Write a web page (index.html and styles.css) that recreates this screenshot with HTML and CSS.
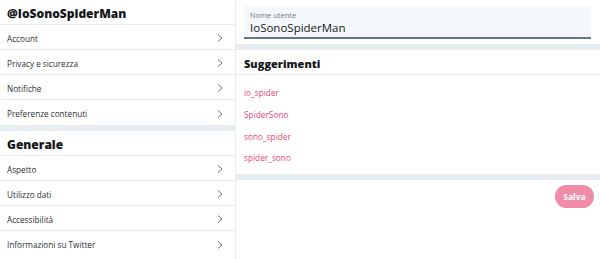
FILE: index.html
```html
<!DOCTYPE html>
<html>
<head>
<meta charset="utf-8">
<link rel="stylesheet" href="styles.css">
</head>
<body>
<div class="app">
  <div class="side">
    <div class="head">@IoSonoSpiderMan</div>
    <div class="row"><span>Account</span><svg class="chev" viewBox="0 0 10 10"><path d="M3 1.5 L7 5 L3 8.5"/></svg></div>
    <div class="row"><span>Privacy e sicurezza</span><svg class="chev" viewBox="0 0 10 10"><path d="M3 1.5 L7 5 L3 8.5"/></svg></div>
    <div class="row"><span>Notifiche</span><svg class="chev" viewBox="0 0 10 10"><path d="M3 1.5 L7 5 L3 8.5"/></svg></div>
    <div class="row last"><span>Preferenze contenuti</span><svg class="chev" viewBox="0 0 10 10"><path d="M3 1.5 L7 5 L3 8.5"/></svg></div>
    <div class="band"></div>
    <div class="head">Generale</div>
    <div class="row"><span>Aspetto</span><svg class="chev" viewBox="0 0 10 10"><path d="M3 1.5 L7 5 L3 8.5"/></svg></div>
    <div class="row"><span>Utilizzo dati</span><svg class="chev" viewBox="0 0 10 10"><path d="M3 1.5 L7 5 L3 8.5"/></svg></div>
    <div class="row"><span>Accessibilità</span><svg class="chev" viewBox="0 0 10 10"><path d="M3 1.5 L7 5 L3 8.5"/></svg></div>
    <div class="row last"><span>Informazioni su Twitter</span><svg class="chev" viewBox="0 0 10 10"><path d="M3 1.5 L7 5 L3 8.5"/></svg></div>
  </div>
  <div class="main">
    <div class="field-wrap">
      <div class="field">
        <div class="label">Nome utente</div>
        <div class="value">IoSonoSpiderMan</div>
      </div>
    </div>
    <div class="band"></div>
    <div class="head sug">Suggerimenti</div>
    <div class="list">
      <div class="item">io_spider</div>
      <div class="item">SpiderSono</div>
      <div class="item">sono_spider</div>
      <div class="item">spider_sono</div>
    </div>
    <div class="band"></div>
    <div class="actions"><button class="save">Salva</button></div>
  </div>
</div>
</body>
</html>
```
FILE: styles.css
```css
html, body { margin: 0; padding: 0; background: #fff; }
body { font-family: "Open Sans", "Noto Sans", sans-serif; color: #14171a; }
.app { display: flex; width: 600px; height: 259px; overflow: hidden; }
.side { width: 235px; border-right: 1px solid #e6ecf0; flex: none; }
.head { border-bottom: 1px solid #e6ecf0; display: flex; align-items: center; padding: 2px 0 0 7px; box-sizing: border-box; height: 25px; font-weight: 800; font-size: 12px; }
.row { height: 25px; box-sizing: border-box; border-bottom: 1px solid #e6ecf0; display: flex; align-items: center; justify-content: space-between; padding: 2px 10px 0 7px; font-size: 8.2px; color: #2a2f33; }
.row.last { border-bottom: none; }
.chev { width: 10px; height: 10px; fill: none; stroke: #657786; stroke-width: 1; }
.band { height: 6px; background: #e6ecf0; }
.main { flex: 1; display: flex; flex-direction: column; }
.field-wrap { padding: 6px 9px 5px 8px; }
.field { background: #f5f8fa; border-bottom: 2px solid #657786; height: 33px; padding: 1px 6px 0; box-sizing: border-box; display: flex; flex-direction: column; justify-content: center; }
.label { font-size: 7.5px; color: #657786; line-height: 10px; }
.value { font-size: 11.5px; color: #14171a; line-height: 15px; }
.sug { font-size: 11px; padding-left: 8px; }
.list { padding: 6px 0 5px 0; height: 99px; box-sizing: border-box; }
.item { height: 21.7px; display: flex; align-items: center; padding: 2px 0 0 8px; box-sizing: border-box; font-size: 8.3px; color: #e0245e; opacity: 0.85; }
.actions { display: flex; justify-content: flex-end; padding: 5px 6px 0 0; }
.save { background: #f08ca9; color: #fff; border: none; border-radius: 12px; font-family: "Open Sans", sans-serif; font-weight: 700; font-size: 8.5px; height: 23px; width: 39px; padding: 0; }
```
